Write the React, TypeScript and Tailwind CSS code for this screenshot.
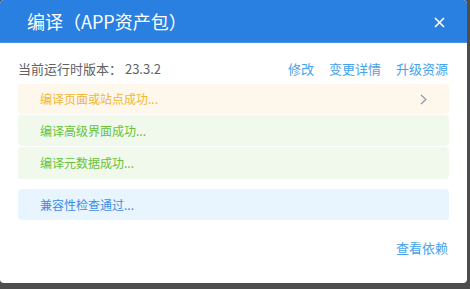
import React from "react";

export default function App() {
  const font = { fontFamily: '"Noto Sans CJK SC", "Noto Sans", sans-serif' };
  return (
    <div className="w-[470px] h-[289px] bg-[#4d4d4d] overflow-hidden" style={font}>
      <div className="w-[467px] h-[283px] bg-white rounded-[4px] overflow-hidden flex flex-col">
        <div className="h-[43px] bg-[#2a80e1] border-b border-[#4b95ea] flex items-center justify-between pl-[27px] pr-[22px] text-white">
          <span className="text-[18px] leading-none">编译（APP资产包）</span>
          <svg width="11" height="11" viewBox="0 0 11 11" className="mt-[2px]">
            <path d="M1 1L10 10M10 1L1 10" stroke="white" strokeWidth="1.6" />
          </svg>
        </div>
        <div className="px-[18px] pt-[16px] flex flex-col">
          <div className="flex items-center justify-between h-[20px] text-[13px]">
            <span className="text-[#606266]">当前运行时版本：&nbsp;23.3.2</span>
            <div className="flex gap-[15px] text-[#45a2ec] mr-[1px]">
              <span>修改</span>
              <span>变更详情</span>
              <span>升级资源</span>
            </div>
          </div>
          <div className="mt-[5px] flex flex-col gap-[1px] text-[12px]">
            <div className="h-[30px] bg-[#fdf8eb] rounded-[4px] flex items-center justify-between pl-[22px] pr-[22px] text-[#f2b535]">
              <span>编译页面或站点成功...</span>
              <svg width="7" height="11" viewBox="0 0 7 11">
                <path d="M1 1L6 5.5L1 10" stroke="#909399" strokeWidth="1.1" fill="none" />
              </svg>
            </div>
            <div className="h-[31px] bg-[#f0f9ec] rounded-[4px] flex items-center pl-[22px] text-[#67c23a]">
              编译高级界面成功...
            </div>
            <div className="h-[32px] bg-[#f0f9ec] rounded-[4px] flex items-center pl-[22px] text-[#67c23a]">
              编译元数据成功...
            </div>
            <div className="h-[31px] mt-[9px] bg-[#e9f5fe] rounded-[4px] flex items-center pl-[22px] text-[#3a8de6]">
              兼容性检查通过...
            </div>
          </div>
          <div className="flex justify-end mt-[18px] text-[13px] text-[#45a2ec] mr-[1px]">
            查看依赖
          </div>
        </div>
      </div>
    </div>
  );
}
